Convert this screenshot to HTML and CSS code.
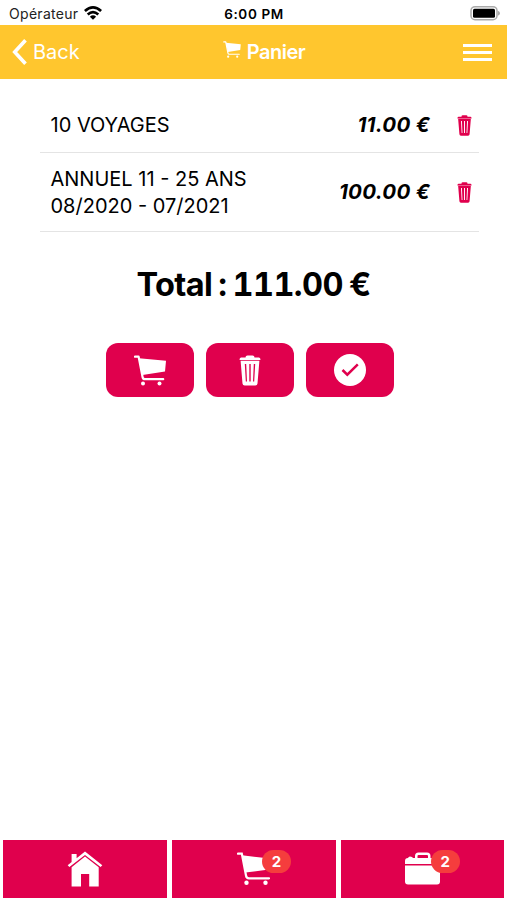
FILE: index.html
```
<!DOCTYPE html>
<html lang="fr">
<head>
    <meta charset="UTF-8">
    <meta name="viewport" content="width=device-width, initial-scale=1.0">
    <title>Panier</title>
    <link rel="stylesheet" href="styles.css">
</head>
<body>
    <!-- Shared icons -->
    <svg class="sprite" xmlns="http://www.w3.org/2000/svg">
        <symbol id="icon-cart" viewBox="0 0 32 31">
            <path d="M5 3.3L32 5.8L31 16.5L8.5 20Z" fill="currentColor"/>
            <path d="M1 1.6H4.6L8.6 22.2Q9 24.2 11 24.2H29.2" fill="none" stroke="currentColor" stroke-width="2.2" stroke-linecap="round" stroke-linejoin="round"/>
            <circle cx="9" cy="28.5" r="2" fill="currentColor"/>
            <circle cx="25.5" cy="28.5" r="2" fill="currentColor"/>
        </symbol>
        <symbol id="icon-trash" viewBox="0 0 22 31">
            <path d="M6.5 2.5Q6.5 .5 8.5 .5H13.5Q15.5 .5 15.5 2.5H20Q21.5 2.5 21.5 5H.5Q.5 2.5 2 2.5Z" fill="currentColor"/>
            <path fill-rule="evenodd" d="M1.6 5.7H20.4L18.5 28.5Q18.3 30.5 16.3 30.5H5.7Q3.7 30.5 3.5 28.5ZM5.8 9L6.8 26.5H8L7.2 9ZM10.3 9V26.5H11.7V9ZM14.8 9L14 26.5H15.2L16.2 9Z" fill="currentColor"/>
        </symbol>
    </svg>

    <div class="status-bar">
        <div class="carrier">
            <span>Opérateur</span>
            <svg class="wifi" viewBox="0 0 18 14" fill="none" stroke="#000" stroke-width="2.7">
                <path d="M.9 5.1Q9-2.2 17.1 5.1"/>
                <path d="M3.7 8.5Q9 3.9 14.3 8.5"/>
                <path d="M9 13.8L5.9 10.7Q9 8 12.1 10.7Z" fill="#000" stroke="none"/>
            </svg>
        </div>
        <div class="clock">6:00 PM</div>
        <div class="status-right">
            <svg class="battery" viewBox="0 0 32 16">
                <rect x="2" y="1.7" width="26" height="13" rx="4" fill="#fff" stroke="#aaa" stroke-width="1.5"/>
                <rect x="4" y="3.7" width="22" height="9" rx="1.5" fill="#000"/>
                <path d="M28.8 5.7Q31 6.5 31 8.2Q31 9.9 28.8 10.7Z" fill="#aaa"/>
            </svg>
        </div>
    </div>

    <header class="header">
        <a class="back" href="#">
            <svg class="chevron" viewBox="0 0 15 26" fill="none" stroke="currentColor" stroke-width="3.6">
                <path d="M13.5 1.2L2.7 13L13.5 24.8"/>
            </svg>
            <span>Back</span>
        </a>
        <h1 class="title">
            <svg class="title-icon"><use href="#icon-cart"/></svg>
            <span>Panier</span>
        </h1>
        <div class="menu">
            <span></span>
            <span></span>
            <span></span>
        </div>
    </header>

    <main class="content">
        <ul class="cart-list">
            <li class="cart-item">
                <div class="item-name">10 VOYAGES</div>
                <div class="item-price">11.00 €</div>
                <svg class="item-delete"><use href="#icon-trash"/></svg>
            </li>
            <li class="cart-item">
                <div class="item-name">ANNUEL 11 - 25 ANS<br>08/2020 - 07/2021</div>
                <div class="item-price">100.00 €</div>
                <svg class="item-delete"><use href="#icon-trash"/></svg>
            </li>
        </ul>

        <h2 class="total">Total : 111.00 €</h2>

        <div class="actions">
            <button class="action"><svg class="cart-icon"><use href="#icon-cart"/></svg></button>
            <button class="action"><svg class="trash-icon"><use href="#icon-trash"/></svg></button>
            <button class="action">
                <svg class="check-icon" viewBox="0 0 32 32">
                    <circle cx="16" cy="16" r="16" fill="currentColor"/>
                    <path d="M8.5 16L13.3 20.7L23.8 10.3" fill="none" stroke="#e0004d" stroke-width="2.5"/>
                </svg>
            </button>
        </div>
    </main>

    <nav class="tabs">
        <a class="tab" href="#">
            <svg class="home-icon" viewBox="0 0 36 36" fill="currentColor">
                <path d="M18 .6L35.3 14.2L33.6 16.1L18 3.9L2.4 16.1L.7 14.2L4.6 11.1V3H9.6V7.2Z"/>
                <path d="M18 5.4L31.7 16.2V35.4H22.2V23H14V35.4H4.6V16.2Z"/>
            </svg>
        </a>
        <a class="tab" href="#">
            <svg class="tab-cart" viewBox="0 0 34 33" fill="currentColor">
                <path d="M5 3.3L33 6.5L32 17.5L8.5 20.5Z"/>
                <path d="M1 1.6H4.8L9 23.5Q9.4 26.3 12 26.3H32" fill="none" stroke="currentColor" stroke-width="2.2" stroke-linecap="round"/>
                <circle cx="9.5" cy="30.7" r="2.2"/>
                <circle cx="28.5" cy="30.7" r="2.2"/>
            </svg>
            <span class="badge">2</span>
        </a>
        <a class="tab" href="#">
            <svg class="bag-icon" viewBox="0 0 35 33" fill="currentColor">
                <path d="M0 12V9Q0 6 3 6Q3.5 4.5 5 4.5Q7.5 4.5 8 6H10V4Q10 .5 13.5 .5H22Q25.5 .5 25.5 4V6H32Q35 6 35 9V12ZM12.5 6H23V4Q23 3 22 3H13.5Q12.5 3 12.5 4Z"/>
                <path d="M0 13.6H35V29.5Q35 32.5 32 32.5H3Q0 32.5 0 29.5Z"/>
            </svg>
            <span class="badge">2</span>
        </a>
    </nav>
</body>
</html>
```
FILE: styles.css
```
* {
    box-sizing: border-box;
}

body {
    display: flex;
    flex-direction: column;
    height: 100vh;
    margin: 0;
    background-color: #fff;
    color: #000;
    font-family: Inter, "Liberation Sans", sans-serif;
    overflow: hidden;
}

svg {
    display: block;
    flex-shrink: 0;
}

a {
    color: inherit;
    text-decoration: none;
}

.sprite {
    position: absolute;
    width: 0;
    height: 0;
}

/* Status bar */
.status-bar {
    display: grid;
    grid-template-columns: 1fr auto 1fr;
    align-items: center;
    height: 25px;
    padding: 2px 6px 0 9px;
    font-size: 14px;
}

.carrier {
    display: flex;
    align-items: center;
    gap: 6px;
    color: #222;
    letter-spacing: 0.3px;
}

.wifi {
    width: 18px;
    height: 14px;
    margin-top: -2px;
}

.clock {
    margin-right: 2px;
    font-size: 13.5px;
    font-weight: 600;
    letter-spacing: 0.6px;
}

.status-right {
    display: flex;
    justify-content: flex-end;
}

.battery {
    width: 32px;
    height: 16px;
    margin-top: -2px;
}

/* Header */
.header {
    display: grid;
    grid-template-columns: 1fr auto 1fr;
    align-items: center;
    height: 54px;
    padding: 0 15px 0 12px;
    background-color: #ffc62e;
    color: #fff;
    font-size: 20px;
}

.back {
    display: flex;
    align-items: center;
    gap: 6px;
}

.chevron {
    width: 15px;
    height: 26px;
}

.title {
    display: flex;
    align-items: center;
    gap: 6px;
    margin: 0 0 0 24px;
    font-size: 20px;
    font-weight: 600;
    letter-spacing: -0.5px;
}

.title-icon {
    width: 18px;
    height: 17px;
    margin-top: -6px;
}

.menu {
    display: flex;
    flex-direction: column;
    gap: 4px;
    justify-self: end;
    width: 29px;
    margin-top: 1px;
}

.menu span {
    height: 3px;
    background-color: #fff;
}

/* Cart */
.content {
    flex: 1;
}

.cart-list {
    margin: 19px 28px 0 40px;
    padding: 0;
    list-style: none;
}

.cart-item {
    display: flex;
    align-items: center;
    height: 55px;
    padding: 0 7px 0 10.5px;
    border-bottom: 1px solid #e4e4e4;
    font-size: 20px;
    line-height: 27px;
}

.cart-item + .cart-item {
    height: 79px;
}

.item-name {
    flex: 1;
    padding-top: 1px;
}

.item-price {
    margin: -1px 27px 0 0;
    font-size: 20.5px;
    font-style: italic;
    font-weight: 700;
    letter-spacing: 0.3px;
}

.item-delete {
    width: 15px;
    height: 21px;
    color: #e0004d;
}

.total {
    margin: 33px 0 0;
    font-size: 32.5px;
    font-weight: 650;
    font-variant-numeric: tabular-nums;
    letter-spacing: -0.6px;
    line-height: 40px;
    text-align: center;
    word-spacing: -2px;
}

.actions {
    display: flex;
    justify-content: center;
    gap: 12px;
    margin: 38px 7px 0 0;
}

.action {
    display: flex;
    align-items: center;
    justify-content: center;
    width: 88px;
    height: 54px;
    padding: 0;
    border: none;
    border-radius: 12px;
    background-color: #e0004d;
    color: #fff;
}

.cart-icon {
    width: 32px;
    height: 31px;
}

.trash-icon {
    width: 22px;
    height: 31px;
}

.check-icon {
    width: 32px;
    height: 32px;
}

/* Bottom tabs */
.tabs {
    display: grid;
    grid-template-columns: repeat(3, 1fr);
    gap: 5px;
    padding: 0 2.6px 2.4px 3.4px;
}

.tab {
    position: relative;
    display: flex;
    align-items: center;
    justify-content: center;
    height: 58px;
    background-color: #e0004d;
    color: #fff;
}

.home-icon {
    width: 36px;
    height: 36px;
}

.tab-cart {
    width: 34px;
    height: 33px;
}

.bag-icon {
    width: 35px;
    height: 33px;
}

.badge {
    position: absolute;
    top: 10px;
    left: 90px;
    width: 29px;
    height: 23px;
    border-radius: 12px;
    background-color: #f53d3d;
    font-size: 15px;
    font-weight: 700;
    line-height: 23px;
    text-align: center;
}
```
